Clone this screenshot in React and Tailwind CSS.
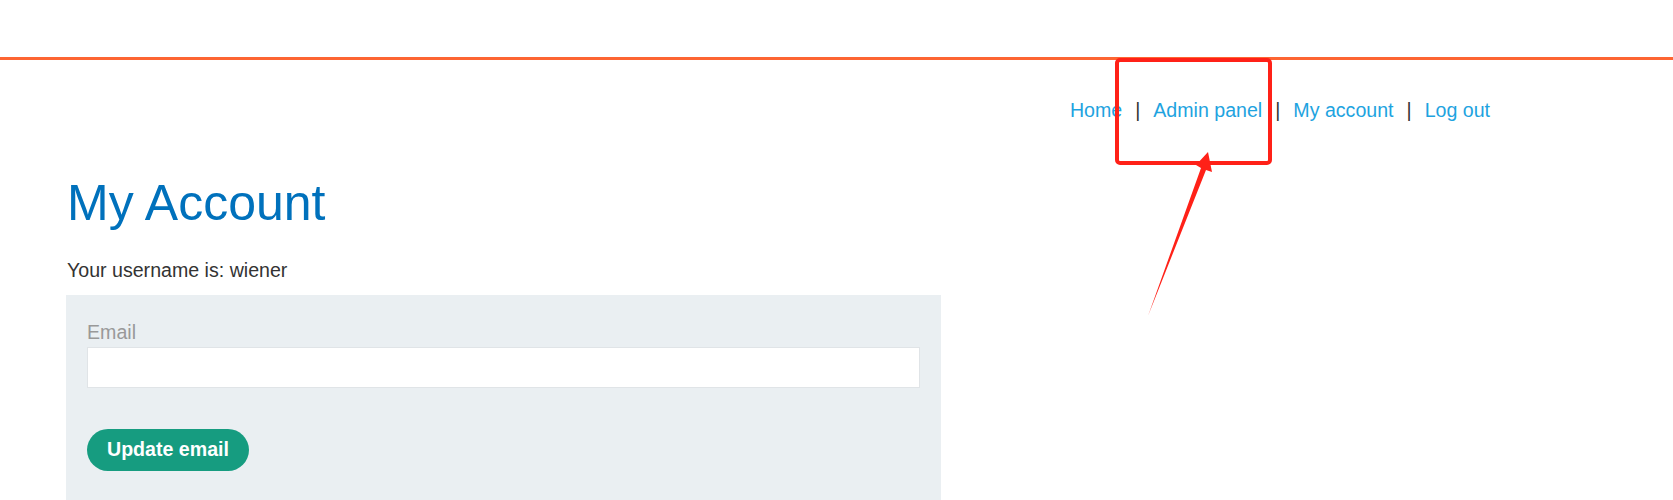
import React from "react";

const navLinks = ["Home", "Admin panel", "My account", "Log out"];

export default function App() {
  return (
    <div
      className="relative h-[500px] overflow-hidden bg-white text-[19.6px] text-[#333]"
      style={{ fontFamily: '"Liberation Sans", Arial, sans-serif' }}
    >
      {/* header strip */}
      <div className="h-[57px]" />
      <div className="h-[3px] bg-[#fd6532]" />

      {/* top navigation */}
      <nav className="mt-[38px] flex justify-end pr-[183px] leading-[24px]">
        {navLinks.map((name, i) => (
          <React.Fragment key={name}>
            {i > 0 && <span className="px-[13px] text-[#333]">|</span>}
            <a href="#" className="text-[#1ea3e0]">
              {name}
            </a>
          </React.Fragment>
        ))}
      </nav>

      <main className="pl-[66px]">
        <h1 className="mt-[57px] pl-[1px] text-[50px] leading-[49px] text-[#0071bc]">
          My Account
        </h1>
        <p className="mt-[30px] pl-[1px] leading-[24px]">Your username is: wiener</p>

        {/* email form */}
        <div className="mt-[13px] w-[875px] bg-[#eaeff2] px-[21px] pt-[25px] pb-[30px]">
          <label className="block leading-[24px] text-[#999]">Email</label>
          <input
            type="email"
            className="mt-[3px] block h-[41px] w-full border border-[#e0e4e7] bg-white outline-none"
          />
          <button className="mt-[41px] h-[42px] rounded-full bg-[#169c80] px-[20px] font-bold text-white">
            Update email
          </button>
        </div>
      </main>

      {/* annotation overlay */}
      <svg className="absolute left-0 top-0" width="1673" height="500" viewBox="0 0 1673 500">
        <rect x="1117" y="60" width="153" height="103" rx="3" fill="none" stroke="#ff2118" strokeWidth="4" />
        <polygon points="1208,152 1212,172 1206,170 1148,316 1201,168 1196,165" fill="#ff2118" />
      </svg>
    </div>
  );
}
